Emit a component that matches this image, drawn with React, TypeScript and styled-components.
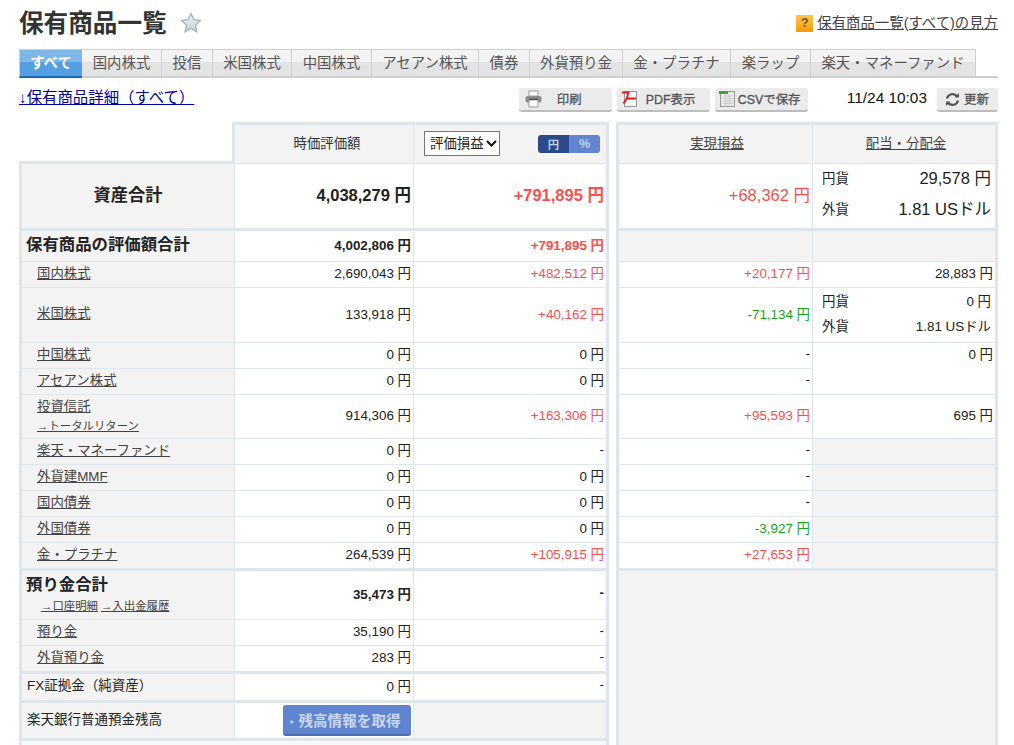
import React from 'react';
import styled, { createGlobalStyle } from 'styled-components';

const LINE = '#dfe7ec';
const EDGE = '#dee6eb';
const GREY = '#f3f3f3';
const PALE = '#f6fafa';
const RED = '#ff4d4d';
const GREEN = '#11a811';

const GlobalStyle = createGlobalStyle`
  html, body {
    margin: 0;
    height: 745px;
    overflow: hidden;
    background: #fff;
  }
  body {
    font-family: "Liberation Sans", "Noto Sans CJK JP", sans-serif;
    font-size: 13.4px;
    color: #222;
  }
`;

const Page = styled.div`
  padding: 0 16px 0 19px;
`;

const TitleBar = styled.div`
  height: 49px;
  display: flex;
  align-items: flex-start;
  justify-content: space-between;
`;

const TitleGroup = styled.div`
  display: flex;
  align-items: center;
  height: 46px;
  gap: 13px;
`;

const Title = styled.h1`
  margin: 2px 0 0;
  font-size: 24.6px;
  line-height: 48px;
  font-weight: bold;
  color: #333;
`;

const HelpLink = styled.a`
  display: flex;
  align-items: center;
  gap: 4px;
  margin-top: 14px;
  font-size: 14.4px;
  line-height: 18px;
  color: #444;
  span {
    text-decoration: underline;
  }
`;

const HelpBadge = styled.i`
  width: 17px;
  height: 17px;
  display: flex;
  align-items: center;
  justify-content: center;
  background: linear-gradient(#ffc64a, #f79a06);
  color: #6b5a30;
  font-style: normal;
  font-weight: bold;
  font-size: 13px;
`;

const TabBar = styled.div`
  display: flex;
  height: 29px;
  box-sizing: border-box;
  border-bottom: 2px solid #cfcfcf;
`;

const Tab = styled.div<{ $active?: boolean; $w: number }>`
  width: ${(p) => p.$w}px;
  box-sizing: border-box;
  height: 29px;
  display: flex;
  align-items: center;
  justify-content: center;
  font-size: 14.4px;
  padding-bottom: 4px;
  border-top: 1px solid #cfcfcf;
  border-right: ${(p) => (p.$active ? '0' : '1px solid #cfcfcf')};
  border-left: ${(p) => (p.$active ? '1px solid #cfcfcf' : '0')};
  border-bottom: 2px solid ${(p) => (p.$active ? '#0f6db8' : '#cfcfcf')};
  color: ${(p) => (p.$active ? '#fff' : '#555')};
  font-weight: ${(p) => (p.$active ? 'bold' : 'normal')};
  background: ${(p) =>
    p.$active
      ? 'linear-gradient(#7db8e8 0, #7db8e8 46%, #559fe0 46%, #559fe0 100%)'
      : 'linear-gradient(#f3f3f3 0, #f3f3f3 46%, #e3e3e3 46%, #e3e3e3 100%)'};
`;

const Toolbar = styled.div`
  height: 44px;
  display: flex;
  align-items: flex-start;
  justify-content: space-between;
`;

const DetailLink = styled.a`
  margin-top: 10px;
  font-size: 15.4px;
  line-height: 20px;
  color: #0000a8;
  text-decoration: underline;
`;

const ToolGroup = styled.div`
  display: flex;
  align-items: flex-start;
  gap: 5px;
  margin-top: 10px;
`;

const ToolButton = styled.button<{ $w: number; $gap: number; $inset?: number }>`
  width: ${(p) => p.$w}px;
  height: 24px;
  box-sizing: border-box;
  display: flex;
  align-items: center;
  gap: ${(p) => p.$gap}px;
  padding: 0 0 0 ${(p) => p.$inset ?? 6}px;
  border: 0;
  border-bottom: 2px solid #bdbdbd;
  border-radius: 3px;
  background: #ebebeb;
  color: #555;
  font-family: inherit;
  font-size: 12.4px;
  font-weight: normal;
  -webkit-text-stroke: 0.3px #555;
`;

const Clock = styled.div`
  margin: 0 5px 0 34px;
  font-size: 15.4px;
  line-height: 20px;
  color: #111;
`;

const Tables = styled.div`
  display: flex;
  gap: 7px;
  align-items: flex-start;
`;

const Table = styled.table<{ $w: number }>`
  width: ${(p) => p.$w}px;
  table-layout: fixed;
  border-collapse: separate;
  border-spacing: 0;
`;

const Row = styled.tr<{ $h: number }>`
  height: ${(p) => p.$h}px;
`;

const Cell = styled.td<{
  $thick?: boolean;
  $grey?: boolean;
  $first?: boolean;
  $last?: boolean;
  $top?: boolean;
  $flat?: boolean;
}>`
  box-sizing: border-box;
  padding: ${(p) => (p.$top ? '0 2px 0 0' : p.$flat ? '0 2px 0 0' : '0 2px 5px 0')};
  text-align: right;
  vertical-align: ${(p) => (p.$top ? 'top' : 'middle')};
  border-bottom: ${(p) => (p.$thick ? `3px solid ${EDGE}` : `1px solid ${LINE}`)};
  border-right: ${(p) => (p.$last ? `3px solid ${EDGE}` : `1px solid ${LINE}`)};
  border-left: ${(p) => (p.$first ? `3px solid ${EDGE}` : '0')};
  background: ${(p) => (p.$grey ? GREY : '#fff')};
`;

const BlankCorner = styled.td`
  box-sizing: border-box;
  padding: 0;
  border-bottom: 3px solid ${EDGE};
  border-right: 3px solid ${EDGE};
`;

const HeadCell = styled.th<{ $first?: boolean; $last?: boolean; $nudge?: number }>`
  box-sizing: border-box;
  padding: 0 0 4px ${(p) => p.$nudge ?? 0}px;
  text-align: center;
  font-weight: normal;
  font-size: 13.4px;
  color: #333;
  background: ${GREY};
  border-top: 3px solid ${EDGE};
  border-bottom: 1px solid ${LINE};
  border-right: ${(p) => (p.$last ? `3px solid ${EDGE}` : `1px solid ${LINE}`)};
  border-left: ${(p) => (p.$first ? `3px solid ${EDGE}` : '0')};
`;

const HeadTools = styled.div`
  display: flex;
  align-items: center;
  justify-content: space-between;
  margin-top: 3px;
  padding: 0 6px 0 10px;
`;

const SelectBox = styled.div`
  position: relative;
  width: 76px;
  height: 25px;
  svg {
    position: absolute;
    top: 9px;
    right: 3px;
    pointer-events: none;
  }
`;

const Select = styled.select`
  appearance: none;
  width: 100%;
  height: 100%;
  padding: 0 0 0 5px;
  border: 1px solid #767676;
  border-radius: 0;
  background: #fff;
  color: #222;
  font-family: inherit;
  font-size: 13.4px;
`;

const Toggle = styled.div`
  display: flex;
  width: 62px;
  height: 18px;
  border-radius: 3px;
  overflow: hidden;
`;

const ToggleItem = styled.span<{ $on?: boolean }>`
  flex: 1;
  display: flex;
  align-items: center;
  justify-content: center;
  font-size: ${(p) => (p.$on ? 11.4 : 12.6)}px;
  font-weight: bold;
  color: #c3d0ea;
  background: ${(p) => (p.$on ? '#2c4a8b' : '#6285d2')};
`;

const HeadLink = styled.a`
  color: #444;
  text-decoration: underline;
`;

const Label = styled(Cell)<{ $kind?: 'sub' | 'total' | 'plain' | 'grand' }>`
  text-align: ${(p) => (p.$kind === 'grand' ? 'center' : 'left')};
  padding: 0 0 ${(p) => (p.$kind === 'sub' ? 2 : p.$kind === 'total' ? 4 : 6)}px
    ${(p) => (p.$kind === 'sub' ? 15 : p.$kind === 'grand' ? 0 : p.$kind === 'plain' ? 5 : 4)}px;
  font-size: ${(p) => (p.$kind === 'total' ? '16.4px' : p.$kind === 'grand' ? '17.2px' : '13.5px')};
  line-height: ${(p) => (p.$kind === 'total' ? '22px' : 'normal')};
  font-weight: ${(p) => (p.$kind === 'sub' || p.$kind === 'plain' ? 'normal' : 'bold')};
  background: ${GREY};
  color: #222;
`;

const PaleCell = styled.td<{ $grey?: boolean }>`
  box-sizing: border-box;
  padding: 0;
  background: ${(p) => (p.$grey ? GREY : PALE)};
  border-left: 3px solid ${EDGE};
  border-right: 3px solid ${EDGE};
`;

const SubLink = styled.a`
  color: #444;
  font-size: 13.4px;
  line-height: 18px;
  text-decoration: underline;
`;

const SmallLink = styled.a`
  display: inline-block;
  font-size: 11.4px;
  line-height: 15px;
  margin-right: 3px;
  color: #444;
  font-weight: normal;
  text-decoration: underline;
`;

const SmallLinks = styled.div<{ $indent?: number }>`
  padding-left: ${(p) => p.$indent ?? 0}px;
  margin-top: 2px;
  line-height: 15px;
`;

const Money = styled.span<{ $tone?: 'red' | 'green'; $size?: number; $bold?: boolean }>`
  font-size: ${(p) => p.$size ?? 13.4}px;
  font-weight: ${(p) => (p.$bold ? 'bold' : 'normal')};
  color: ${(p) => (p.$tone === 'red' ? RED : p.$tone === 'green' ? GREEN : '#222')};
`;

const CurrencyList = styled.div<{ $gap: number; $lift?: number }>`
  display: flex;
  flex-direction: column;
  gap: ${(p) => p.$gap}px;
  padding: 0 2px ${(p) => p.$lift ?? 0}px 9px;
`;

const CurrencyRow = styled.div`
  display: flex;
  align-items: center;
  justify-content: space-between;
  height: 18px;
  font-size: 13.4px;
`;

const FetchButton = styled.button`
  display: block;
  width: 128px;
  height: 31px;
  margin-left: auto;
  box-sizing: border-box;
  border: 0;
  border-bottom: 2px solid #4a6cb0;
  border-radius: 3px;
  background: #6085d0;
  color: #c9d7f3;
  font-family: inherit;
  font-size: 14.6px;
  font-weight: bold;
  padding: 0 3px 0 0;
  &::before {
    content: '‣';
    font-size: 11px;
    margin-right: 4px;
  }
`;

const StarIcon = () => (
  <svg width="22" height="22" viewBox="0 0 22 22">
    <defs>
      <linearGradient id="star" x1="0" y1="0" x2="0" y2="1">
        <stop offset="0" stopColor="#eef2f5" />
        <stop offset="1" stopColor="#c3ced8" />
      </linearGradient>
    </defs>
    <path
      d="M11 1.5l2.9 6.2 6.6.8-4.9 4.6 1.3 6.7L11 16.5l-5.9 3.3 1.3-6.7L1.500 8.500l6.600-.8z"
      fill="url(#star)"
      stroke="#9fb0bf"
      strokeWidth="1.2"
    />
  </svg>
);

const ChevronIcon = () => (
  <svg width="11" height="7" viewBox="0 0 11 7">
    <path d="M1 1l4.500 4.500L10 1" fill="none" stroke="#111" strokeWidth="2" />
  </svg>
);

const PrintIcon = () => (
  <svg width="17" height="18" viewBox="0 0 17 18">
    <rect x="4" y="1" width="9" height="5" fill="#fff" stroke="#999" />
    <rect x="0.5" y="6" width="16" height="6.5" rx="2" fill="#8d8d8d" />
    <rect x="4" y="10" width="9" height="7" fill="#fff" stroke="#999" />
    <rect x="4" y="8.5" width="9" height="1.5" fill="#555" />
  </svg>
);

const PdfIcon = () => (
  <svg width="16" height="18" viewBox="0 0 16 18">
    <rect x="2.5" y="1.5" width="12" height="15" fill="#f7f7f7" stroke="#999" />
    <path d="M0 2.5h7.5M6 2.5c0 5-2 8-4.5 11M4 8.5h10" fill="none" stroke="#e02020" strokeWidth="2" />
  </svg>
);

const CsvIcon = () => (
  <svg width="16" height="18" viewBox="0 0 16 18">
    <rect x="1.500" y="1.500" width="14" height="15" fill="#e9e9e9" stroke="#999" />
    <path d="M4 6h10M4 8.500h10M4 11h10M4 13.500h10M7 5v10M10.500 5v10" stroke="#c8c8c8" strokeWidth="0.8" />
    <rect x="0" y="1" width="9" height="3" fill="#3aa535" />
  </svg>
);

const RefreshIcon = () => (
  <svg width="15" height="15" viewBox="0 0 15 15">
    <path d="M2 6.500A5.700 5.700 0 0 1 12 4.200" fill="none" stroke="#555" strokeWidth="2.200" />
    <path d="M13 8.500A5.700 5.700 0 0 1 3 10.800" fill="none" stroke="#555" strokeWidth="2.200" />
    <path d="M9.500 5.500h4.500V1zM5.500 9.500H1V14z" fill="#555" />
  </svg>
);

const TABS: [string, number][] = [
  ['すべて', 63],
  ['国内株式', 80],
  ['投信', 51],
  ['米国株式', 79],
  ['中国株式', 80],
  ['アセアン株式', 107],
  ['債券', 51],
  ['外貨預り金', 93],
  ['金・プラチナ', 108],
  ['楽ラップ', 80],
  ['楽天・マネーファンド', 165],
];

type Tone = 'red' | 'green' | undefined;

const toneOf = (v: string): Tone => (v[0] === '+' ? 'red' : v[0] === '-' && v.length > 1 ? 'green' : undefined);

interface AssetRow {
  label: string;
  height: number;
  value: string;
  gain: string;
  realized: string;
  extra?: string;
  thick?: boolean;
}

const ASSETS: AssetRow[] = [
  { label: '国内株式', height: 26, value: '2,690,043 円', gain: '+482,512 円', realized: '+20,177 円' },
  { label: '米国株式', height: 55, value: '133,918 円', gain: '+40,162 円', realized: '-71,134 円' },
  { label: '中国株式', height: 26, value: '0 円', gain: '0 円', realized: '-' },
  { label: 'アセアン株式', height: 26, value: '0 円', gain: '0 円', realized: '-' },
  { label: '投資信託', extra: '→トータルリターン', height: 44, value: '914,306 円', gain: '+163,306 円', realized: '+95,593 円' },
  { label: '楽天・マネーファンド', height: 26, value: '0 円', gain: '-', realized: '-' },
  { label: '外貨建MMF', height: 26, value: '0 円', gain: '0 円', realized: '-' },
  { label: '国内債券', height: 26, value: '0 円', gain: '0 円', realized: '-' },
  { label: '外国債券', height: 26, value: '0 円', gain: '0 円', realized: '-3,927 円' },
  { label: '金・プラチナ', height: 28, value: '264,539 円', gain: '+105,915 円', realized: '+27,653 円', thick: true },
];

const DividendCell: React.FC<{ label: string }> = ({ label }) => {
  switch (label) {
    case '国内株式':
      return <Cell $last><Money>28,883 円</Money></Cell>;
    case '米国株式':
      return (
        <Cell $last>
          <CurrencyList $gap={7}>
            <CurrencyRow>円貨<Money>0 円</Money></CurrencyRow>
            <CurrencyRow>外貨<Money>1.81 USドル</Money></CurrencyRow>
          </CurrencyList>
        </Cell>
      );
    case '中国株式':
      return <Cell $last $top rowSpan={2}><Money>0 円</Money></Cell>;
    case 'アセアン株式':
      return null;
    case '投資信託':
      return <Cell $last><Money>695 円</Money></Cell>;
    default:
      return <Cell $last $grey $thick={label === '金・プラチナ'} />;
  }
};

export default function App() {
  return (
    <Page>
      <GlobalStyle />
      <TitleBar>
        <TitleGroup>
          <Title>保有商品一覧</Title>
          <StarIcon />
        </TitleGroup>
        <HelpLink>
          <HelpBadge>?</HelpBadge>
          <span>保有商品一覧(すべて)の見方</span>
        </HelpLink>
      </TitleBar>

      <TabBar>
        {TABS.map(([name, w], i) => (
          <Tab key={name} $active={i === 0} $w={w}>{name}</Tab>
        ))}
      </TabBar>

      <Toolbar>
        <DetailLink>↓保有商品詳細（すべて）</DetailLink>
        <ToolGroup>
          <ToolButton $w={93} $gap={15}><PrintIcon />印刷</ToolButton>
          <ToolButton $w={93} $gap={8} $inset={5}><PdfIcon />PDF表示</ToolButton>
          <ToolButton $w={93} $gap={3} $inset={4}><CsvIcon />CSVで保存</ToolButton>
          <Clock>11/24 10:03</Clock>
          <ToolButton $w={61} $gap={4} $inset={8}><RefreshIcon />更新</ToolButton>
        </ToolGroup>
      </Toolbar>

      <Tables>
        <Table $w={590}>
          <colgroup>
            <col width={216} />
            <col width={179} />
            <col width={195} />
          </colgroup>
          <tbody>
            <Row $h={42}>
              <BlankCorner />
              <HeadCell $nudge={6}>時価評価額</HeadCell>
              <HeadCell $last>
                <HeadTools>
                  <SelectBox>
                    <Select defaultValue="gain">
                      <option value="gain">評価損益</option>
                    </Select>
                    <ChevronIcon />
                  </SelectBox>
                  <Toggle>
                    <ToggleItem $on>円</ToggleItem>
                    <ToggleItem>%</ToggleItem>
                  </Toggle>
                </HeadTools>
              </HeadCell>
            </Row>
            <Row $h={67}>
              <Label $first $thick $kind="grand">資産合計</Label>
              <Cell $thick><Money $size={16.5} $bold>4,038,279 円</Money></Cell>
              <Cell $thick $last><Money $size={16.5} $bold $tone="red">+791,895 円</Money></Cell>
            </Row>
            <Row $h={31}>
              <Label $first $kind="total">保有商品の評価額合計</Label>
              <Cell><Money $bold>4,002,806 円</Money></Cell>
              <Cell $last><Money $bold $tone="red">+791,895 円</Money></Cell>
            </Row>
            {ASSETS.map((a) => (
              <Row key={a.label} $h={a.height}>
                <Label $first $kind="sub" $thick={a.thick}>
                  <SubLink>{a.label}</SubLink>
                  {a.extra && <SmallLinks><SmallLink>{a.extra}</SmallLink></SmallLinks>}
                </Label>
                <Cell $thick={a.thick}><Money>{a.value}</Money></Cell>
                <Cell $last $thick={a.thick}><Money $tone={toneOf(a.gain)}>{a.gain}</Money></Cell>
              </Row>
            ))}
            <Row $h={49}>
              <Label $first $kind="total">
                預り金合計
                <SmallLinks $indent={15}>
                  <SmallLink>→口座明細</SmallLink>
                  <SmallLink>→入出金履歴</SmallLink>
                </SmallLinks>
              </Label>
              <Cell><Money $bold>35,473 円</Money></Cell>
              <Cell $last><Money $bold>-</Money></Cell>
            </Row>
            <Row $h={26}>
              <Label $first $kind="sub"><SubLink>預り金</SubLink></Label>
              <Cell><Money>35,190 円</Money></Cell>
              <Cell $last><Money>-</Money></Cell>
            </Row>
            <Row $h={28}>
              <Label $first $kind="sub" $thick><SubLink>外貨預り金</SubLink></Label>
              <Cell $thick><Money>283 円</Money></Cell>
              <Cell $last $thick><Money>-</Money></Cell>
            </Row>
            <Row $h={28}>
              <Label $first $kind="plain" $thick>FX証拠金（純資産）</Label>
              <Cell $thick><Money>0 円</Money></Cell>
              <Cell $last $thick><Money>-</Money></Cell>
            </Row>
            <Row $h={38}>
              <Label $first $kind="plain" $thick>楽天銀行普通預金残高</Label>
              <Cell $thick $flat><FetchButton>残高情報を取得</FetchButton></Cell>
              <Cell $last $thick $grey />
            </Row>
            <Row $h={40}>
              <PaleCell colSpan={3} />
            </Row>
          </tbody>
        </Table>

        <Table $w={382}>
          <colgroup>
            <col width={197} />
            <col width={185} />
          </colgroup>
          <tbody>
            <Row $h={42}>
              <HeadCell $first $nudge={3}><HeadLink>実現損益</HeadLink></HeadCell>
              <HeadCell $last $nudge={4}><HeadLink>配当・分配金</HeadLink></HeadCell>
            </Row>
            <Row $h={67}>
              <Cell $first $thick><Money $size={16.5} $tone="red">+68,362 円</Money></Cell>
              <Cell $last $thick>
                <CurrencyList $gap={13} $lift={2}>
                  <CurrencyRow>円貨<Money $size={16.5}>29,578 円</Money></CurrencyRow>
                  <CurrencyRow>外貨<Money $size={16.5}>1.81 USドル</Money></CurrencyRow>
                </CurrencyList>
              </Cell>
            </Row>
            <Row $h={31}>
              <Cell $first $grey />
              <Cell $last $grey />
            </Row>
            {ASSETS.map((a) => (
              <Row key={a.label} $h={a.height}>
                <Cell $first $thick={a.thick}><Money $tone={toneOf(a.realized)}>{a.realized}</Money></Cell>
                <DividendCell label={a.label} />
              </Row>
            ))}
            <Row $h={209}>
              <PaleCell $grey colSpan={2} />
            </Row>
          </tbody>
        </Table>
      </Tables>
    </Page>
  );
}
